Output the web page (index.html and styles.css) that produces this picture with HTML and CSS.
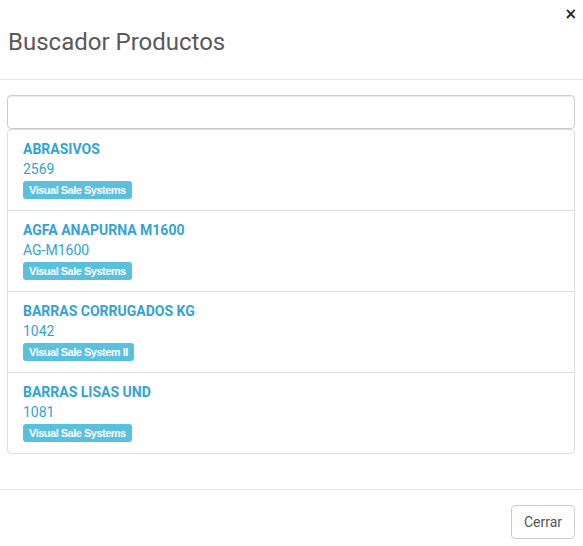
FILE: index.html
```html
<!DOCTYPE html>
<html lang="es">
<head>
<meta charset="utf-8">
<link rel="stylesheet" href="styles.css">
</head>
<body>
<div class="modal">
  <div class="modal-header">
    <button class="close" type="button">&times;</button>
    <h4 class="modal-title">Buscador Productos</h4>
  </div>
  <div class="modal-body">
    <input class="form-control" type="text">
    <div class="list-group">
      <a class="list-group-item">
        <div class="item-name">ABRASIVOS</div>
        <div class="item-code">2569</div>
        <span class="label">Visual Sale Systems</span>
      </a>
      <a class="list-group-item">
        <div class="item-name">AGFA ANAPURNA M1600</div>
        <div class="item-code">AG-M1600</div>
        <span class="label">Visual Sale Systems</span>
      </a>
      <a class="list-group-item">
        <div class="item-name">BARRAS CORRUGADOS KG</div>
        <div class="item-code">1042</div>
        <span class="label">Visual Sale System II</span>
      </a>
      <a class="list-group-item">
        <div class="item-name">BARRAS LISAS UND</div>
        <div class="item-code">1081</div>
        <span class="label">Visual Sale Systems</span>
      </a>
    </div>
  </div>
  <div class="modal-footer">
    <button class="btn" type="button">Cerrar</button>
  </div>
</div>
</body>
</html>
```
FILE: styles.css
```css
* { box-sizing: border-box; }
html, body {
  margin: 0;
  padding: 0;
  background: #fff;
  font-family: Roboto, "Liberation Sans", sans-serif;
  font-size: 14px;
  line-height: 20px;
  color: #555;
}
.modal {
  width: 583px;
}
.modal-header {
  position: relative;
  padding: 22px 8px 17px;
  border-bottom: 1px solid #e5e5e5;
}
.modal-title {
  margin: 0;
  font-size: 24px;
  font-weight: 400;
  line-height: 40px;
  color: #595959;
}
.close {
  position: absolute;
  top: 4px;
  right: 6px;
  padding: 0;
  border: 0;
  background: none;
  font-family: "DejaVu Sans", sans-serif;
  font-size: 15px;
  font-weight: 700;
  line-height: 20px;
  color: #222;
}
.modal-body {
  padding: 15px 8px 15px 7px;
}
.form-control {
  display: block;
  width: 100%;
  height: 34px;
  margin: 0;
  border: 1px solid #ccc;
  border-radius: 4px;
  box-shadow: inset 0 1px 1px rgba(0,0,0,.075);
  font: inherit;
}
.list-group {
  margin-bottom: 20px;
}
.list-group-item {
  display: block;
  padding: 9px 15px 11px;
  border: 1px solid #ddd;
  margin-bottom: -1px;
  color: #33a3d4;
}
.list-group-item:first-child {
  border-top-left-radius: 4px;
  border-top-right-radius: 4px;
}
.list-group-item:last-child {
  border-bottom-left-radius: 4px;
  border-bottom-right-radius: 4px;
  margin-bottom: 0;
}
.item-name {
  font-weight: 700;
}
.label {
  display: inline-block;
  margin-top: 2px;
  padding: 0 6px;
  height: 18px;
  line-height: 18px;
  border-radius: 3px;
  background: #5bc0de;
  color: #fff;
  font-family: "Liberation Sans", Arial, sans-serif;
  font-size: 11px;
  font-weight: 700;
  letter-spacing: -0.5px;
}
.modal-footer {
  padding: 15px 8px;
  border-top: 1px solid #e5e5e5;
  display: flex;
  justify-content: flex-end;
}
.btn {
  height: 34px;
  padding: 6px 12px;
  border: 1px solid #ccc;
  border-radius: 4px;
  background: #fff;
  font: inherit;
  color: #555;
}
```
